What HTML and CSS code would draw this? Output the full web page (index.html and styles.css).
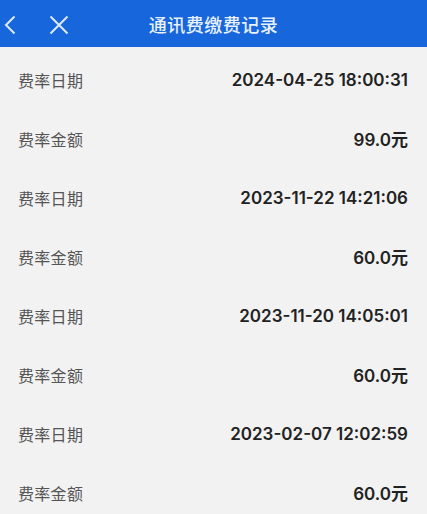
FILE: index.html
```html
<!DOCTYPE html>
<html lang="zh-CN">
<head>
    <meta charset="UTF-8">
    <meta name="viewport" content="width=device-width, initial-scale=1.0">
    <title>通讯费缴费记录</title>
    <link rel="stylesheet" href="styles.css">
</head>
<body>
    <div class="header">
        <div class="header-icons">
            <svg class="icon-back" width="12" height="20" viewBox="0 0 12 20">
                <path d="M10.5 1.5 L2 10 L10.5 18.5" fill="none" stroke="#dcebff" stroke-width="2"/>
            </svg>
            <svg class="icon-close" width="20" height="20" viewBox="0 0 20 20">
                <path d="M1.5 1.5 L18.5 18.5 M18.5 1.5 L1.5 18.5" fill="none" stroke="#dcebff" stroke-width="2"/>
            </svg>
        </div>
        <h1 class="title">通讯费缴费记录</h1>
    </div>

    <div class="list">
        <div class="row"><span class="label">费率日期</span><span class="value">2024-04-25 18:00:31</span></div>
        <div class="row"><span class="label">费率金额</span><span class="value">99.0元</span></div>
        <div class="row"><span class="label">费率日期</span><span class="value">2023-11-22 14:21:06</span></div>
        <div class="row"><span class="label">费率金额</span><span class="value">60.0元</span></div>
        <div class="row"><span class="label">费率日期</span><span class="value">2023-11-20 14:05:01</span></div>
        <div class="row"><span class="label">费率金额</span><span class="value">60.0元</span></div>
        <div class="row"><span class="label">费率日期</span><span class="value">2023-02-07 12:02:59</span></div>
        <div class="row"><span class="label">费率金额</span><span class="value">60.0元</span></div>
    </div>
</body>
</html>
```

FILE: styles.css
```css
body { margin: 0; background: #f2f2f2; font-family: "Noto Sans CJK SC", "Noto Sans", sans-serif; overflow: hidden; }
.header { position: relative; height: 47px; background: #1766dc; display: flex; align-items: center; justify-content: center; }
.header-icons { position: absolute; left: 4px; top: 15px; display: flex; align-items: center; gap: 33px; }
.title { margin: 0; font-size: 18px; font-weight: 500; color: #e8f1ff; letter-spacing: 0.5px; }
.list { padding-top: 3px; }
.row { height: 59px; display: flex; align-items: center; justify-content: space-between; padding: 0 19px 0 18px; }
.label { font-size: 16px; color: #555555; letter-spacing: 0.3px; }
.value { font-family: Inter, "Noto Sans CJK SC", sans-serif; font-size: 17px; font-weight: 600; color: #222222; }
```
